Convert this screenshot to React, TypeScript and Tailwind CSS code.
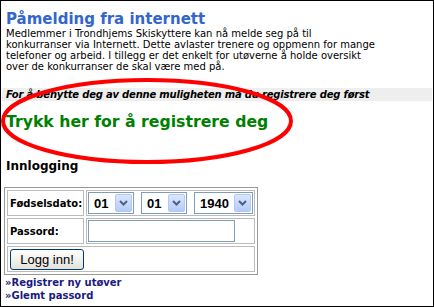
function Select({ value, width }: { value: string; width: string }) {
  return (
    <div className={`flex h-[22px] ${width} items-center border border-[#7f9db9] bg-white`}>
      <span className="flex-1 pl-[5px] font-['Liberation_Sans',Arial,sans-serif] text-[13px] leading-none">{value}</span>
      <div className="mr-[1px] flex h-[18px] w-[17px] items-center justify-center rounded-[2px] border border-[#b5c8f2] bg-gradient-to-b from-[#dbe6fe] to-[#b5cbf8]">
        <svg width="9" height="6" viewBox="0 0 9 6">
          <path d="M1 1 L4.5 4.5 L8 1" fill="none" stroke="#4d6185" strokeWidth="2" />
        </svg>
      </div>
    </div>
  );
}

export default function App() {
  return (
    <div className="relative h-[307px] w-[434px] overflow-hidden border border-black bg-white font-['DejaVu_Sans',Verdana,sans-serif] text-black">
      <h1 className="mt-[9px] px-[5px] text-[15px] font-bold leading-[18px] text-[#3366cc]">Påmelding fra internett</h1>
      <p className="px-[5px] text-[10px] leading-[11px]">
        Medlemmer i Trondhjems Skiskyttere kan nå melde seg på til
        <br />
        konkurranser via Internett. Dette avlaster trenere og oppmenn for mange
        <br />
        telefoner og arbeid. I tillegg er det enkelt for utøverne å holde oversikt
        <br />
        over de konkurranser de skal være med på.
      </p>

      <div className="mx-[1px] mt-[16px] bg-[#eeeeee] px-[4px] text-[10px] font-bold italic leading-[13px] tracking-[-0.2px]">
        For å benytte deg av denne muligheten må du registrere deg først
      </div>

      <div className="mt-[11px] px-[5px] text-[15.7px] font-bold leading-[20px] text-[#008000]">
        Trykk her for å registrere deg
      </div>

      <h2 className="mt-[27px] px-[5px] text-[12px] font-bold leading-[15px]">Innlogging</h2>

      <div className="ml-[3px] mt-[13px] grid w-[254px] grid-cols-[77px_169px] gap-[2px] border border-[#999] p-[2px] text-[10px] font-bold">
        <div className="flex h-[26px] items-center border border-[#bbb] px-[2px]">Fødselsdato:</div>
        <div className="flex h-[26px] items-center gap-[7px] border border-[#bbb] px-[1px]">
          <Select value="01" width="w-[46px]" />
          <Select value="01" width="w-[46px]" />
          <Select value="1940" width="w-[59px]" />
        </div>
        <div className="flex h-[26px] items-center border border-[#bbb] px-[2px]">Passord:</div>
        <div className="flex h-[26px] items-center border border-[#bbb] px-[1px]">
          <div className="h-[22px] w-[147px] border border-[#7f9db9] bg-white" />
        </div>
        <div className="col-span-2 flex h-[26px] items-center border border-[#bbb] px-[2px]">
          <button className="h-[21px] w-[74px] rounded-[3px] border border-[#003c74] bg-gradient-to-b from-white to-[#e3e2da] font-['Liberation_Sans',Arial,sans-serif] text-[13px] font-normal leading-none text-black">
            Logg inn!
          </button>
        </div>
      </div>

      <div className="mt-[1px] px-[4px] text-[10px] font-bold leading-[13px] text-[#1a1a80]">
        <div>»Registrer ny utøver</div>
        <div>»Glemt passord</div>
      </div>

      <svg className="pointer-events-none absolute left-0 top-0" width="434" height="307">
        <ellipse cx="146" cy="120" rx="144" ry="41" fill="none" stroke="#ff0000" strokeWidth="4" />
      </svg>
    </div>
  );
}
